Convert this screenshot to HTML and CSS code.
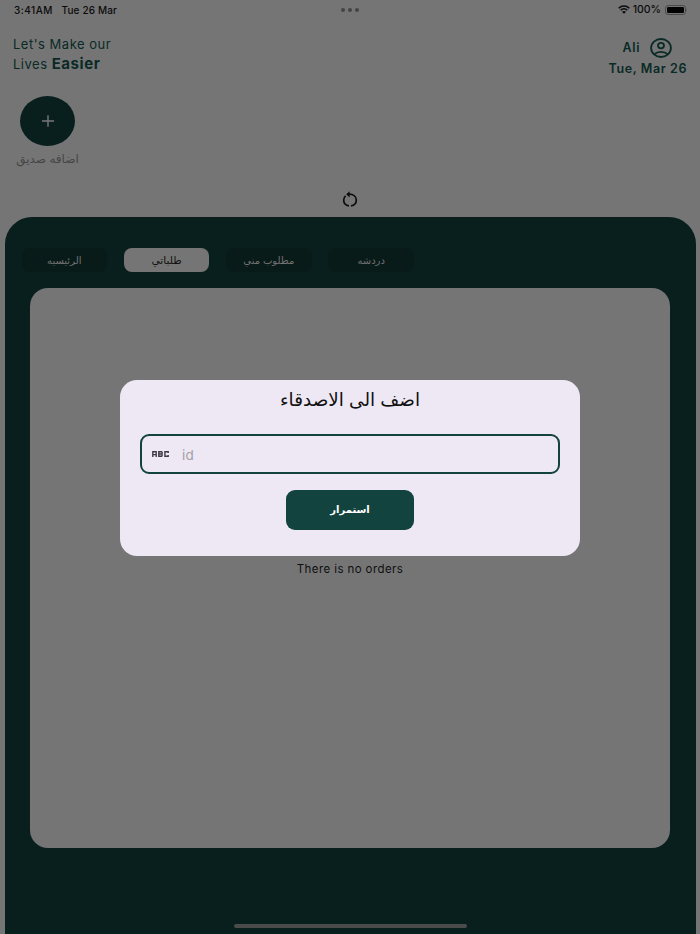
FILE: index.html
```html
<!DOCTYPE html>
<html lang="en">
<head>
  <meta charset="UTF-8">
  <meta name="viewport" content="width=device-width, initial-scale=1.0">
  <title>Orders</title>
  <link rel="stylesheet" href="styles.css">
</head>
<body>
  <div class="status-bar">
    <div class="status-left"><span class="time">3:41AM</span><span class="date">Tue 26 Mar</span></div>
    <div class="dots"><i></i><i></i><i></i></div>
    <div class="status-right">
      <svg class="wifi" viewBox="0 0 12 9" width="12" height="9">
        <path d="M0.7 3.2C3.7 0.3 8.3 0.3 11.3 3.2M2.6 5.2C4.5 3.4 7.5 3.4 9.4 5.2" fill="none" stroke="#0b0b0b" stroke-width="1.5"/>
        <path d="M4 6.7Q6 5.1 8 6.7L6 8.8Z" fill="#0b0b0b"/>
      </svg>
      <span class="percent">100%</span>
      <svg class="battery" viewBox="0 0 23 10" width="23" height="10">
        <rect x="0.5" y="0.5" width="20" height="9" rx="2.6" fill="none" stroke="#4a4a4a"/>
        <rect x="2" y="2" width="17" height="6" rx="1.3" fill="#000"/>
        <path d="M21.5 3.5Q22.8 5 21.5 6.5Z" fill="#444"/>
      </svg>
    </div>
  </div>

  <header class="header">
    <div class="slogan">Let's Make our<br>Lives <b>Easier</b></div>
    <div class="user">
      <div class="user-name">
        <span>Ali</span>
        <svg viewBox="0 0 22 20" width="22" height="20" fill="none" stroke="#0a2a26" stroke-width="1.8">
          <ellipse cx="11" cy="10" rx="9.9" ry="9"/>
          <ellipse cx="11" cy="7.6" rx="3" ry="2.7"/>
          <path d="M4.4 16.2C7.6 13.1 14.4 13.1 17.6 16.2"/>
        </svg>
      </div>
      <div class="user-date">Tue, Mar 26</div>
    </div>
  </header>

  <div class="friends">
    <div class="friend">
      <div class="add-circle">
        <svg viewBox="0 0 12 12" width="12" height="12" stroke="#777" stroke-width="1.4"><path d="M6 0.3V11.7M0 6H12"/></svg>
      </div>
      <span class="friend-label" dir="rtl">اضافه صديق</span>
    </div>
  </div>

  <div class="refresh">
    <svg viewBox="0 0 16 16" width="16" height="16" fill="none" stroke="#0c0c0c" stroke-width="1.7">
      <path d="M7 14.8C3.8 14.4 1.7 12 1.7 9C1.7 7.3 2.4 5.8 3.6 4.8M9 14.8C12.2 14.4 14.3 12 14.3 9C14.3 5.6 11.5 3.2 7 3.2"/>
      <path d="M7.6 0.2V6.4L4.2 3.3Z" fill="#0c0c0c" stroke="none"/>
    </svg>
  </div>

  <main class="panel">
    <nav class="tabs">
      <div class="tab" dir="rtl">الرئيسيه</div>
      <div class="tab active" dir="rtl">طلباتي</div>
      <div class="tab" dir="rtl">مطلوب مني</div>
      <div class="tab" dir="rtl">دردشه</div>
    </nav>
    <div class="orders">There is no orders</div>
    <div class="home-bar"></div>
  </main>

  <div class="overlay">
    <div class="modal">
      <h2 class="modal-title" dir="rtl">اضف الى الاصدقاء</h2>
      <div class="field">
        <svg viewBox="0 0 17 6" width="17" height="6" fill="none" stroke="#3f3b45" stroke-width="1.4">
          <path d="M0.8 6V0.7H4.2V6M0.8 3.6H4.2"/>
          <path d="M6.8 0.7H9.6L10.1 1.2V2.5L9.6 3L10.1 3.5V4.8L9.6 5.3H6.8ZM6.8 3H9.6"/>
          <path d="M16.2 2V0.7H12.9V5.3H16.2V4"/>
        </svg>
        <span class="placeholder">id</span>
      </div>
      <button class="continue" dir="rtl">استمرار</button>
    </div>
  </div>
</body>
</html>
```

FILE: styles.css
```css
* {
  box-sizing: border-box;
}

body {
  margin: 0;
  height: 934px;
  display: flex;
  flex-direction: column;
  overflow: hidden;
  background-color: #757575;
  font-family: Inter, "DejaVu Sans", sans-serif;
  color: #0a2a26;
}

svg {
  display: block;
}

.status-bar {
  display: grid;
  grid-template-columns: 1fr auto 1fr;
  align-items: center;
  height: 19px;
  padding: 0 12px 0 14px;
  font-size: 10px;
  font-weight: 500;
  color: #0b0b0b;
}

.status-left,
.status-right {
  display: flex;
  align-items: center;
}

.status-left {
  gap: 8.5px;
}

.time {
  letter-spacing: 0.5px;
}

.date {
  letter-spacing: 0.15px;
}

.status-right {
  justify-content: flex-end;
  gap: 4px;
}

.wifi {
  margin-right: -1px;
}

.percent {
  font-size: 10.5px;
}

.dots {
  display: flex;
  gap: 3px;
  padding-right: 2px;
}

.dots i {
  width: 4px;
  height: 4px;
  border-radius: 50%;
  background-color: #444;
}

.header {
  display: flex;
  justify-content: space-between;
  height: 77px;
  padding: 16px 13px 0;
}

.slogan {
  font-size: 13px;
  line-height: 19px;
  letter-spacing: 0.5px;
}

.slogan b {
  font-size: 15px;
  letter-spacing: 0.55px;
}

.user {
  display: flex;
  flex-direction: column;
  align-items: flex-end;
  padding-top: 2px;
  font-size: 12.5px;
  font-weight: 600;
  letter-spacing: 0.6px;
}

.user-name {
  display: flex;
  align-items: center;
  gap: 10px;
  height: 21px;
  padding-right: 15px;
}

.user-date {
  line-height: 21px;
}

.friends {
  display: flex;
  height: 94px;
  padding-left: 16px;
}

.friend {
  display: flex;
  flex-direction: column;
  align-items: center;
  width: 63px;
}

.add-circle {
  display: flex;
  justify-content: center;
  align-items: center;
  width: 55px;
  height: 50px;
  border-radius: 50%;
  background-color: #091f1d;
}

.friend-label {
  margin-top: 5px;
  font-size: 12px;
  line-height: 16px;
  white-space: nowrap;
  color: #454545;
}

.refresh {
  display: flex;
  justify-content: center;
  height: 27px;
  padding-top: 1px;
}

.panel {
  flex: 1;
  display: flex;
  flex-direction: column;
  margin: 0 4.5px;
  padding: 31px 17px 0;
  border-radius: 27px 27px 0 0;
  background-color: #091f1d;
}

.tabs {
  display: grid;
  grid-template-columns: repeat(4, 85.5px);
  gap: 16.8px;
  height: 24px;
}

.tab {
  display: flex;
  justify-content: center;
  align-items: center;
  border-radius: 8px;
  background-color: #081b19;
  font-size: 10px;
  white-space: nowrap;
  color: #727272;
}

.tab.active {
  background-color: #757575;
  font-size: 10.5px;
  color: #111;
}

.orders {
  display: flex;
  justify-content: center;
  align-items: center;
  height: 560px;
  margin: 16px 8.5px 0;
  padding-top: 2px;
  border-radius: 18px;
  background-color: #757575;
  font-size: 11.5px;
  letter-spacing: 0.4px;
  color: #0f0f0f;
}

.home-bar {
  width: 233px;
  height: 4px;
  margin: 76px auto 0;
  border-radius: 2px;
  background-color: #4b4b4b;
}

.overlay {
  position: absolute;
  inset: 0;
  display: flex;
  justify-content: center;
  align-items: flex-start;
  padding-top: 380px;
}

.modal {
  display: flex;
  flex-direction: column;
  align-items: center;
  width: 460px;
  height: 176px;
  padding: 0 20px;
  border-radius: 17px;
  background-color: #eee8f4;
}

.modal-title {
  height: 54px;
  margin: 0;
  padding-top: 5px;
  font-size: 18.4px;
  font-weight: 400;
  line-height: 28px;
  color: #111;
}

.field {
  display: flex;
  align-items: center;
  gap: 13px;
  width: 100%;
  height: 40px;
  padding-left: 10px;
  border: 2px solid #13433f;
  border-radius: 9px;
}

.placeholder {
  padding-top: 1px;
  font-size: 13.5px;
  letter-spacing: 0.3px;
  color: #a39fa8;
}

.continue {
  width: 128px;
  height: 40px;
  margin-top: 16px;
  padding: 0 0 2px;
  border: none;
  border-radius: 9px;
  background-color: #13433f;
  font-family: inherit;
  font-size: 10px;
  font-weight: 700;
  color: #fff;
}
```
